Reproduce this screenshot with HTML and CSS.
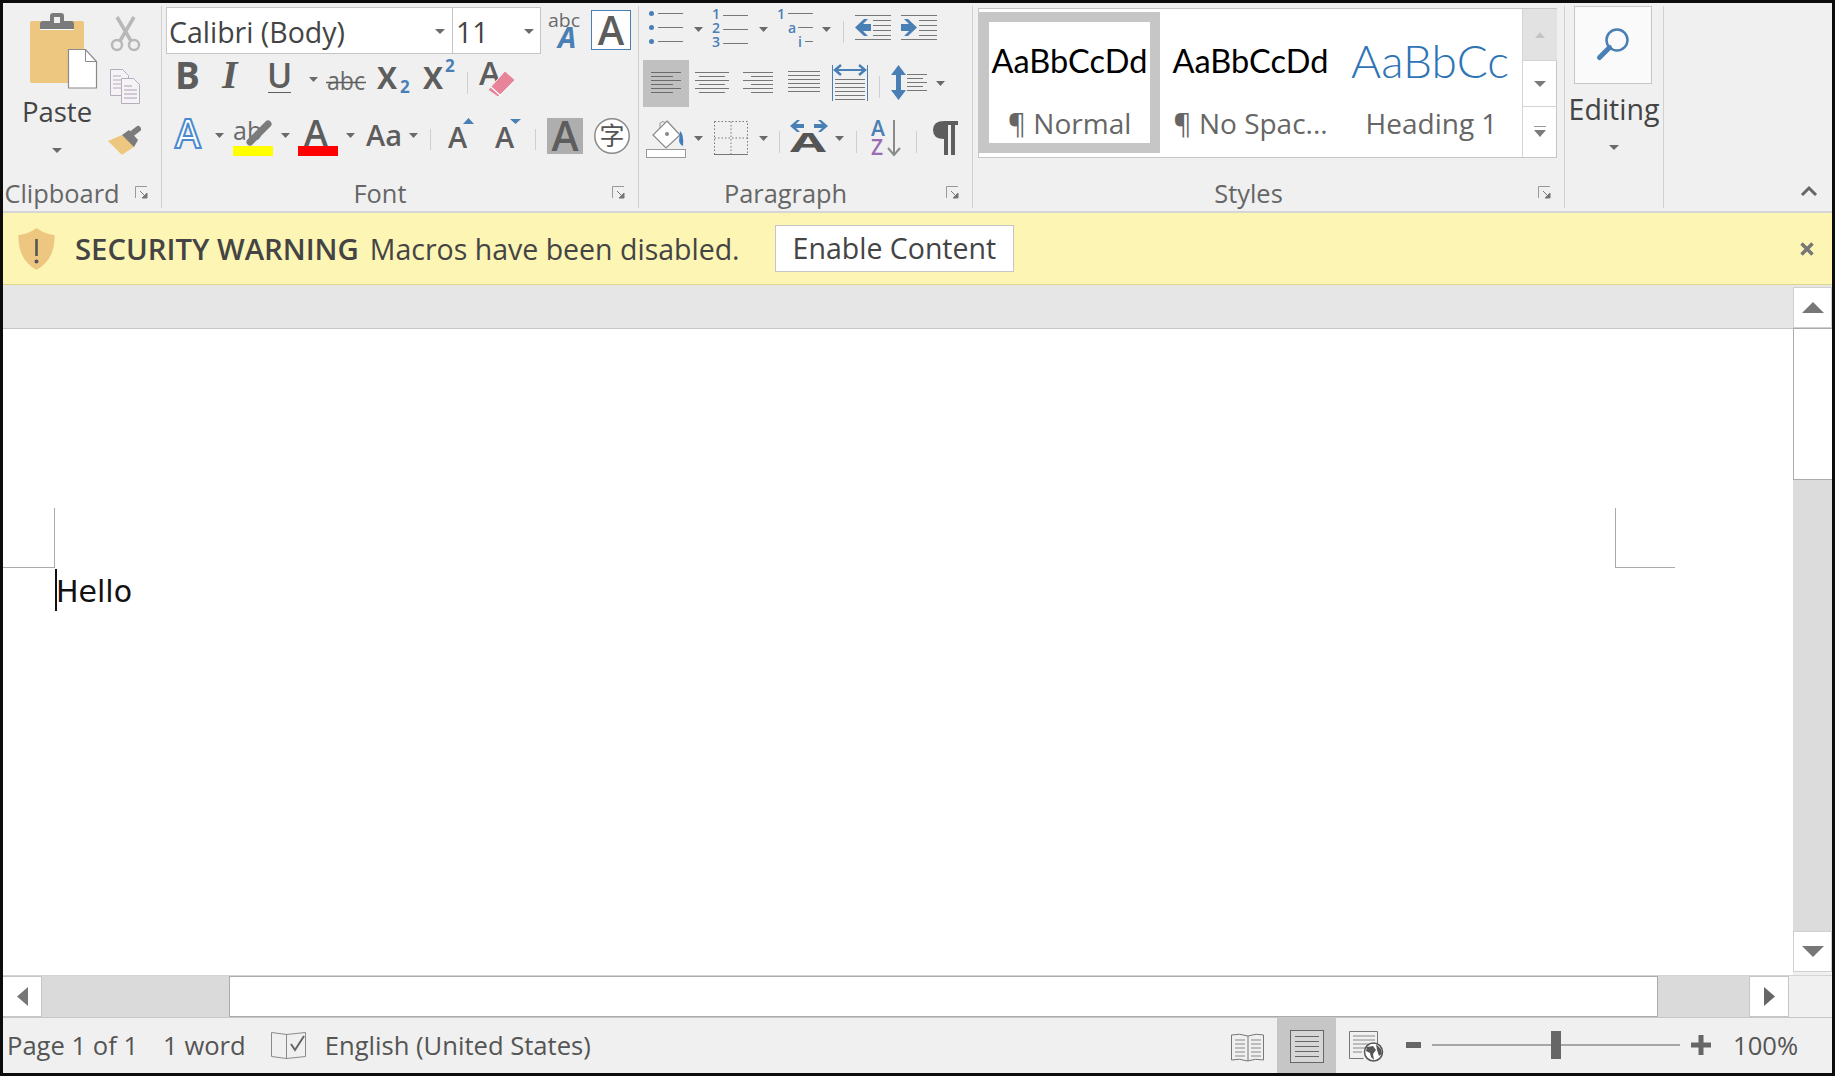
FILE: index.html
```html
<!DOCTYPE html>
<html>
<head>
	<meta charset="UTF-8">
	<title>Word</title>
	<link rel="stylesheet" href="styles.css">
</head>
<body>
<div class="window">

	<div class="ribbon">
		<!-- clipboard -->
		<div class="group g-clip">
			<div class="gbody clip-body">
				<div class="paste">
					<svg width="96" height="84" viewBox="9 6 96 84">
						<rect x="30" y="21" width="54" height="62" rx="2" fill="#edc77f"/>
						<path d="M40 29v-5q0-3 3-3h7v-5q0-3 3-3h8q3 0 3 3v5h7q3 0 3 3v5z" fill="#7b7b7b"/>
						<rect x="54" y="17" width="6" height="6" fill="#f0f0f0"/>
						<path d="M40 29.500h34" stroke="#fff" stroke-width="1"/>
						<path d="M68.500 49.500h17l11 12v26.500h-28z" fill="#fff" stroke="#8a8a8a" stroke-width="1.200"/>
						<path d="M85.500 49.500v12h11" fill="none" stroke="#8a8a8a"/>
					</svg>
					<div class="paste-text">Paste</div>
					<svg class="paste-caret" width="12" height="8" viewBox="0 0 12 8"><polygon points="1,1 11,1 6,6" fill="#6a6a6a"/></svg>
				</div>
				<div class="clip-tools">
					<svg width="45" height="54" viewBox="105 6 45 54">
						<path d="M117 17l14 24M134 17l-14 24" stroke="#b8b8b8" stroke-width="3.500" fill="none"/>
						<circle cx="117" cy="45" r="5" fill="none" stroke="#b8b8b8" stroke-width="2.500"/>
						<circle cx="134" cy="45" r="5" fill="none" stroke="#b8b8b8" stroke-width="2.500"/>
					</svg>
					<svg width="45" height="54" viewBox="105 60 45 54">
						<path d="M110.500 69.500h12l6 6v20h-18z" fill="#f6f3f7" stroke="#b5acbd"/>
						<path d="M113 76h8M113 80h12M113 84h12M113 88h12" stroke="#b5acbd"/>
						<path d="M121.500 78.500h12l6 6v19h-18z" fill="#f6f3f7" stroke="#b5acbd"/>
						<path d="M124 86h8M124 90h13M124 94h13M124 98h13" stroke="#a9a0b0"/>
					</svg>
					<svg width="45" height="54" viewBox="105 114 45 54">
						<polygon points="108,140 122,134 135,145 122,154" fill="#edc77f"/>
						<polygon points="122,134 129,129 138,139 134,146" fill="#7b7b7b"/>
						<path d="M129 135l9-7" stroke="#7b7b7b" stroke-width="6" stroke-linecap="round"/>
					</svg>
				</div>
			</div>
			<div class="glabel">Clipboard
				<svg class="launch" width="13" height="13" viewBox="0 0 13 13"><path d="M.5 12v-11.500h11.500" fill="none" stroke="#999"/><path d="M5 5l5 5M12 7v5h-5z" fill="#777" stroke="#777"/></svg>
			</div>
		</div>

		<!-- font -->
		<div class="group g-font">
			<div class="gbody font-body">
				<div class="row row-combo">
					<div class="combo combo-name"><span>Calibri (Body)</span><svg width="12" height="8" viewBox="0 0 12 8"><polygon points="1,1 11,1 6,6" fill="#6a6a6a"/></svg></div>
					<div class="combo combo-size"><span>11</span><svg width="12" height="8" viewBox="0 0 12 8"><polygon points="1,1 11,1 6,6" fill="#6a6a6a"/></svg></div>
					<svg width="46" height="47" viewBox="541 7 46 47">
						<text x="548" y="27" class="t" font-size="19" fill="#6a6a6a" textLength="32" lengthAdjust="spacingAndGlyphs">abc</text>
						<text x="558" y="48" class="t" font-size="29" font-weight="700" font-style="italic" fill="#4a7fb5">A</text>
					</svg>
					<div class="box-a">A</div>
				</div>
				<div class="row row-b">
					<svg width="35" height="38" viewBox="170 60 35 38"><text x="175" y="89" class="t" font-size="37" font-weight="700" fill="#5d5d5d">B</text></svg>
					<svg width="48" height="38" viewBox="205 60 48 38"><text x="222" y="88" class="serif" font-size="40" font-weight="700" font-style="italic" fill="#5d5d5d">I</text></svg>
					<svg width="52" height="38" viewBox="253 60 52 38"><text x="267" y="88" class="t" font-size="34" font-weight="600" fill="#5d5d5d">U</text><path d="M268 92.500h23" stroke="#5d5d5d"/></svg>
					<svg width="16" height="38" viewBox="305 60 16 38"><polygon points="309,77 318,77 313.500,82" fill="#6a6a6a"/></svg>
					<svg width="50" height="38" viewBox="321 60 50 38"><text x="327" y="90" class="t" font-size="26" fill="#6a6a6a" textLength="38" lengthAdjust="spacingAndGlyphs">abc</text><path d="M326 82.500h40" stroke="#5d5d5d" stroke-width="1.500"/></svg>
					<svg width="46" height="38" viewBox="371 60 46 38"><text x="377" y="89" class="t" font-size="30" font-weight="700" fill="#5d5d5d">X</text><text x="400" y="93" class="t" font-size="17" font-weight="700" fill="#4a7fb5">2</text></svg>
					<svg width="46" height="38" viewBox="417 60 46 38"><text x="423" y="89" class="t" font-size="30" font-weight="700" fill="#5d5d5d">X</text><text x="445" y="72" class="t" font-size="17" font-weight="700" fill="#4a7fb5">2</text></svg>
					<svg width="12" height="38" viewBox="463 60 12 38"><path d="M467.500 72v22" stroke="#cfcfcf"/></svg>
					<svg width="47" height="38" viewBox="475 60 47 38">
						<text x="479" y="85" class="t" font-size="33" font-weight="600" fill="#5d5d5d">A</text>
						<polygon points="488,90 505,71 515,80 498,97" fill="#e8849a" stroke="#f0f0f0"/>
						<path d="M491 87l10 9" stroke="#fff" stroke-width="1.200"/>
					</svg>
				</div>
				<div class="row row-c">
					<svg width="41" height="44" viewBox="170 114 41 44"><text x="175" y="148" class="t" font-size="39" font-weight="600" fill="#fff" stroke="#4a8ad0" stroke-width="2">A</text></svg>
					<svg width="16" height="44" viewBox="211 114 16 44"><polygon points="215,133 224,133 219.500,138" fill="#6a6a6a"/></svg>
					<svg width="50" height="44" viewBox="227 114 50 44">
						<text x="233" y="140" class="t" font-size="25" fill="#6a6a6a">ab</text>
						<path d="M268 124l-18 18" stroke="#7b7b7b" stroke-width="7" stroke-linecap="round"/>
						<rect x="233" y="146" width="40" height="10" fill="#ff0"/>
					</svg>
					<svg width="16" height="44" viewBox="277 114 16 44"><polygon points="281,133 290,133 285.500,138" fill="#6a6a6a"/></svg>
					<svg width="50" height="44" viewBox="293 114 50 44">
						<text x="304" y="146" class="t" font-size="36" font-weight="600" fill="#5d5d5d">A</text>
						<rect x="298" y="146" width="40" height="10" fill="#f00"/>
					</svg>
					<svg width="16" height="44" viewBox="343 114 16 44"><polygon points="346,133 355,133 350.500,138" fill="#6a6a6a"/></svg>
					<svg width="47" height="44" viewBox="359 114 47 44"><text x="366" y="146" class="t" font-size="29" font-weight="600" fill="#5d5d5d">Aa</text></svg>
					<svg width="16" height="44" viewBox="406 114 16 44"><polygon points="409,133 418,133 413.500,138" fill="#6a6a6a"/></svg>
					<svg width="14" height="44" viewBox="422 114 14 44"><path d="M430.500 129v21" stroke="#cfcfcf"/></svg>
					<svg width="45" height="44" viewBox="436 114 45 44"><text x="448" y="148" class="t" font-size="29" font-weight="600" fill="#5d5d5d">A</text><polygon points="463,124 474,124 468.500,118" fill="#4a7fb5"/></svg>
					<svg width="48" height="44" viewBox="481 114 48 44"><text x="495" y="148" class="t" font-size="29" font-weight="600" fill="#5d5d5d">A</text><polygon points="510,119 521,119 515.500,124" fill="#4a7fb5"/></svg>
					<svg width="14" height="44" viewBox="529 114 14 44"><path d="M535.500 129v21" stroke="#cfcfcf"/></svg>
					<div class="shade-a">A</div>
					<svg class="ruby" width="40" height="44" viewBox="591 114 40 44"><circle cx="611" cy="136" r="17.200" fill="#fff" stroke="#8a8a8a" stroke-width="1.500"/><text x="611" y="145" class="cjk" text-anchor="middle" font-size="25" fill="#555">字</text></svg>
				</div>
			</div>
			<div class="glabel">Font
				<svg class="launch" width="13" height="13" viewBox="0 0 13 13"><path d="M.5 12v-11.500h11.500" fill="none" stroke="#999"/><path d="M5 5l5 5M12 7v5h-5z" fill="#777" stroke="#777"/></svg>
			</div>
		</div>

		<!-- paragraph -->
		<div class="group g-para">
			<div class="gbody para-body">
				<div class="row row-p1">
					<svg width="60" height="40" viewBox="643 8 60 40" class="first">
						<g fill="#4a7fb5"><circle cx="651.500" cy="13.500" r="2.500"/><circle cx="651.500" cy="27.500" r="2.500"/><circle cx="651.500" cy="41.500" r="2.500"/></g>
						<path d="M658 13.500h25M658 27.500h25M658 41.500h25" stroke="#777"/>
						<polygon points="694,27 703,27 698.500,32" fill="#6a6a6a"/>
					</svg>
					<svg width="65" height="40" viewBox="703 8 65 40">
						<g class="t" font-size="14" fill="#4a7fb5" font-weight="600"><text x="712" y="19">1</text><text x="712" y="33">2</text><text x="712" y="47">3</text></g>
						<path d="M723 15.500h25M723 29.500h25M723 43.500h25" stroke="#777"/>
						<polygon points="759,27 768,27 763.500,32" fill="#6a6a6a"/>
					</svg>
					<svg width="63" height="40" viewBox="768 8 63 40">
						<g class="t" font-size="14" fill="#4a7fb5" font-weight="600"><text x="777" y="19">1</text><text x="788" y="33">a</text><text x="798" y="47">i</text></g>
						<path d="M788 13.500h25M798 27.500h15M805 41.500h8" stroke="#777"/>
						<polygon points="822,27 831,27 826.500,32" fill="#6a6a6a"/>
					</svg>
					<svg width="18" height="40" viewBox="831 8 18 40"><path d="M843.500 21v22" stroke="#cfcfcf"/></svg>
					<svg width="46" height="40" viewBox="849 8 46 40">
						<path d="M855 15.500h36M873 20.500h18M873 25.500h18M873 30.500h18M873 35.500h18M855 39.500h36" stroke="#777"/>
						<polygon points="855,27.500 864,19 868,19 863,24 871,24 871,31 863,31 868,36 864,36" fill="#4a7fb5"/>
					</svg>
					<svg width="46" height="40" viewBox="895 8 46 40">
						<path d="M901 15.500h36M919 20.500h18M919 25.500h18M919 30.500h18M919 35.500h18M901 39.500h36" stroke="#777"/>
						<polygon points="917,27.500 908,19 904,19 909,24 901,24 901,31 909,31 904,36 908,36" fill="#4a7fb5"/>
					</svg>
				</div>
				<div class="row row-p2">
					<svg width="46" height="52" viewBox="643 58 46 52" class="first">
						<rect x="643" y="60" width="46" height="47" fill="#c0c0c0"/>
						<path d="M651 72.500h30M651 76.500h22M651 80.500h30M651 84.500h22M651 88.500h30M651 92.500h22" stroke="#6a6a6a"/>
					</svg>
					<svg width="46" height="52" viewBox="689 58 46 52">
						<path d="M695 72.500h34M699 76.500h26M695 80.500h34M699 84.500h26M695 88.500h34M699 92.500h26" stroke="#777"/>
					</svg>
					<svg width="46" height="52" viewBox="735 58 46 52">
						<path d="M743 72.500h30M751 76.500h22M743 80.500h30M751 84.500h22M743 88.500h30M751 92.500h22" stroke="#777"/>
					</svg>
					<svg width="46" height="52" viewBox="781 58 46 52">
						<path d="M788 71.500h32M788 75.500h32M788 79.500h32M788 83.500h32M788 87.500h32M788 91.500h32" stroke="#777"/>
					</svg>
					<svg width="46" height="52" viewBox="827 58 46 52">
						<path d="M832.500 65v36M867.500 65v36" stroke="#4a7fb5"/>
						<path d="M837 70h26" stroke="#4a7fb5" stroke-width="2"/>
						<path d="M841 65l-6 5 6 5M859 65l6 5-6 5" fill="none" stroke="#4a7fb5" stroke-width="2.500"/>
						<path d="M835 79.500h30M835 83.500h30M835 87.500h30M835 91.500h30M835 95.500h30M835 99.500h30" stroke="#777"/>
					</svg>
					<svg width="14" height="52" viewBox="873 58 14 52"><path d="M879.500 76v22" stroke="#cfcfcf"/></svg>
					<svg width="60" height="52" viewBox="887 58 60 52">
						<polygon points="891,75 898.500,65 906,75 901,75 901,90 906,90 898.500,100 891,90 896,90 896,75" fill="#4a7fb5"/>
						<path d="M907 74.500h20M907 78.500h16M907 82.500h20M907 86.500h16M907 90.500h20" stroke="#777"/>
						<polygon points="936,81 945,81 940.500,86" fill="#6a6a6a"/>
					</svg>
				</div>
				<div class="row row-p3">
					<svg width="60" height="42" viewBox="643 118 60 42" class="first">
						<rect x="646.500" y="149.500" width="39" height="8" fill="#fff" stroke="#999"/>
						<path d="M660 130v-7q3-3 6 0v10" fill="none" stroke="#999"/>
						<polygon points="667,121 680,135 666,148 653,135" fill="#fff" stroke="#888" stroke-width="1.200"/>
						<circle cx="667" cy="134" r="2" fill="#888"/>
						<path d="M680 131q4 3 3 15-3-1-4-5z" fill="#3f7fbf"/>
						<polygon points="694,136 703,136 698.500,141" fill="#6a6a6a"/>
					</svg>
					<svg width="65" height="42" viewBox="703 118 65 42">
						<path d="M714.500 121.500h33v33M714.500 121.500v33M731 121.500v33M714.500 138h33" fill="none" stroke="#777" stroke-dasharray="1.500 2"/>
						<path d="M714 154.500h34" stroke="#777"/>
						<polygon points="759,136 768,136 763.500,141" fill="#6a6a6a"/>
					</svg>
					<svg width="10" height="42" viewBox="768 118 10 42"></svg>
					<svg width="8" height="42" viewBox="778 118 8 42"><path d="M779.500 131v22" stroke="#cfcfcf"/></svg>
					<svg width="64" height="42" viewBox="786 118 64 42">
						<text x="790" y="152" class="t" font-size="27" font-weight="700" fill="#555" textLength="36" lengthAdjust="spacingAndGlyphs">A</text>
						<polygon points="790,126 797,120 800,120 796,124 804,124 804,128 796,128 800,132 797,132" fill="#4a7fb5"/>
						<polygon points="828,126 821,120 818,120 822,124 814,124 814,128 822,128 818,132 821,132" fill="#4a7fb5"/>
						<polygon points="835,136 844,136 839.500,141" fill="#6a6a6a"/>
					</svg>
					<svg width="12" height="42" viewBox="850 118 12 42"><path d="M856.500 131v22" stroke="#cfcfcf"/></svg>
					<svg width="48" height="42" viewBox="862 118 48 42">
						<text x="871" y="136" class="t" font-size="21" font-weight="600" fill="#4a7fb5">A</text>
						<text x="871" y="155" class="t" font-size="21" font-weight="600" fill="#9b6bb5">Z</text>
						<path d="M894 120v35M888 148l6 7 6-7" fill="none" stroke="#8a8a8a" stroke-width="2"/>
					</svg>
					<svg width="13" height="42" viewBox="910 118 13 42"><path d="M916.500 131v22" stroke="#cfcfcf"/></svg>
					<svg width="40" height="42" viewBox="923 118 40 42">
						<path d="M958 121h-14q-11 0-11 9t11 9v16h4v-30h3v30h4v-30h3z" fill="#5d5d5d"/>
					</svg>
				</div>
			</div>
			<div class="glabel">Paragraph
				<svg class="launch" width="13" height="13" viewBox="0 0 13 13"><path d="M.5 12v-11.500h11.500" fill="none" stroke="#999"/><path d="M5 5l5 5M12 7v5h-5z" fill="#777" stroke="#777"/></svg>
			</div>
		</div>

		<!-- styles -->
		<div class="group g-styles">
			<div class="gbody">
				<div class="gallery">
					<div class="style-item sel">
						<div class="sample">AaBbCcDd</div>
						<div class="style-name">¶ Normal</div>
					</div>
					<div class="style-item">
						<div class="sample">AaBbCcDd</div>
						<div class="style-name">¶ No Spac...</div>
					</div>
					<div class="style-item">
						<div class="sample sample-h">AaBbCc</div>
						<div class="style-name">Heading 1</div>
					</div>
					<div class="gal-btns">
						<div class="gal-btn gal-up"><svg width="12" height="8" viewBox="0 0 12 8"><polygon points="1,7 11,7 6,1" fill="#c4c4c4"/></svg></div>
						<div class="gal-btn gal-down"><svg width="12" height="8" viewBox="0 0 12 8"><polygon points="0,1 12,1 6,7" fill="#7b7b7b"/></svg></div>
						<div class="gal-btn gal-more"><svg width="12" height="12" viewBox="0 0 12 12"><path d="M0 .5h12" stroke="#999"/><polygon points="0,4 12,4 6,11" fill="#7b7b7b"/></svg></div>
					</div>
				</div>
			</div>
			<div class="glabel">Styles
				<svg class="launch" width="13" height="13" viewBox="0 0 13 13"><path d="M.5 12v-11.500h11.500" fill="none" stroke="#999"/><path d="M5 5l5 5M12 7v5h-5z" fill="#777" stroke="#777"/></svg>
			</div>
		</div>

		<!-- editing -->
		<div class="group g-edit">
			<div class="find">
				<svg width="40" height="40" viewBox="0 0 40 40"><circle cx="24" cy="15" r="10.500" fill="none" stroke="#4a7fb5" stroke-width="2.500"/><path d="M16.500 22.500l-10 10" stroke="#4a7fb5" stroke-width="5" stroke-linecap="round"/></svg>
			</div>
			<div class="edit-text">Editing</div>
			<svg class="edit-caret" width="12" height="8" viewBox="0 0 12 8"><polygon points="1,1 11,1 6,6" fill="#6a6a6a"/></svg>
		</div>

		<div class="ribbon-end">
			<svg width="20" height="14" viewBox="0 0 20 14"><path d="M3 11l7-7 7 7" fill="none" stroke="#666" stroke-width="3"/></svg>
		</div>
	</div>

	<div class="warning">
		<svg class="shield" width="37" height="42" viewBox="0 0 37 42">
			<path d="M18.500 0q8 6 18 7 1 24-18 35-19-11-18-35 10-1 18-7z" fill="#edc77f"/>
			<path d="M17.200 11h2.600v17h-2.600z" fill="#555"/><circle cx="18.500" cy="33.500" r="2" fill="#555"/>
		</svg>
		<b class="warn-title">SECURITY WARNING</b>
		<span class="warn-msg">Macros have been disabled.</span>
		<div class="enable">Enable Content</div>
		<svg class="warn-close" width="14" height="14" viewBox="0 0 14 14"><path d="M1.500 1.500l11 11M12.500 1.500l-11 11" stroke="#777" stroke-width="3.500"/></svg>
	</div>

	<div class="main">
		<div class="doc-area">
			<div class="band"></div>
			<div class="page">
				<div class="crops">
					<div class="crop crop-l"></div>
					<div class="crop crop-r"></div>
				</div>
				<div class="line"><i class="cursor"></i><span class="hello">Hello</span></div>
			</div>
		</div>
		<div class="vscroll">
			<div class="vbtn vbtn-up"><svg width="22" height="11" viewBox="0 0 22 11"><polygon points="0,11 22,11 11,0" fill="#777"/></svg></div>
			<div class="vthumb"></div>
			<div class="vtrack"></div>
			<div class="vbtn vbtn-down"><svg width="22" height="11" viewBox="0 0 22 11"><polygon points="0,0 22,0 11,11" fill="#777"/></svg></div>
		</div>
	</div>

	<div class="hscroll">
		<div class="hbtn hbtn-l"><svg width="11" height="19" viewBox="0 0 11 19"><polygon points="11,0 11,19 0,9.500" fill="#777"/></svg></div>
		<div class="htrack htrack-l"></div>
		<div class="hthumb"></div>
		<div class="htrack htrack-r"></div>
		<div class="hbtn hbtn-r"><svg width="11" height="19" viewBox="0 0 11 19"><polygon points="0,0 0,19 11,9.500" fill="#666"/></svg></div>
	</div>

	<div class="status">
		<span class="st-page">Page 1 of 1</span>
		<span class="st-words">1 word</span>
		<svg class="st-book" width="35" height="29" viewBox="0 0 35 29">
			<path d="M.5 1.500l15 2v24l-15-2zM34.500 1.500l-19 2v24l19-2z" fill="none" stroke="#8a8a8a"/>
			<path d="M20 13l4 6 9-14" fill="none" stroke="#666" stroke-width="2"/>
		</svg>
		<span class="st-lang">English (United States)</span>
		<div class="st-right">
			<svg width="52" height="55" viewBox="1225 1018 52 55">
				<path d="M1248 1036q-9-3-16.500-1v25q8-2 16 1 8-3 16-1v-25q-7-2-15.500 1zM1248 1036v25" fill="none" stroke="#777"/>
				<path d="M1235 1040h10M1235 1044h10M1235 1048h10M1235 1052h10M1235 1056h10M1251 1040h10M1251 1044h10M1251 1048h10M1251 1052h10M1251 1056h10" stroke="#888"/>
			</svg>
			<svg class="st-on" width="59" height="55" viewBox="1277 1018 59 55">
				<rect x="1290.500" y="1030.500" width="33" height="32" fill="#d6d6d6" stroke="#666"/>
				<path d="M1295 1036.500h24M1295 1041.500h24M1295 1046.500h24M1295 1051.500h24M1295 1056.500h24" stroke="#666"/>
			</svg>
			<svg width="389" height="55" viewBox="1336 1018 389 55">
				<path d="M1349.500 1031.500h28v20M1349.500 1031.500v27h14" fill="none" stroke="#777"/>
				<path d="M1353 1036h22M1353 1040h22M1353 1044h16M1353 1048h12M1353 1052h9" stroke="#888"/>
				<circle cx="1373.500" cy="1052" r="9" fill="#fff" stroke="#555" stroke-width="1.500"/>
				<path d="M1367 1047l6-1 3 4-3 4 1 6-3-3-1-4-4-2zM1376 1044l5 5 1 5-3 2-2-6z" fill="#555"/>
				<path d="M1406 1045h15" stroke="#666" stroke-width="6"/>
				<path d="M1432 1045h248" stroke="#a6a6a6" stroke-width="2"/>
				<rect x="1551" y="1031" width="10" height="28" fill="#666"/>
				<path d="M1691 1045h20M1701 1035v20" stroke="#666" stroke-width="5"/>
			</svg>
			<span class="st-zoom">100%</span>
		</div>
	</div>

</div>
</body>
</html>
```

FILE: styles.css
```css
* {margin:0; padding:0; box-sizing:border-box;}
html, body {width:1835px; height:1076px; overflow:hidden;}
body {font-family:"Open Sans","Noto Sans",sans-serif; background:#000; color:#555;}
svg {display:block; flex:none; overflow:visible;}
svg .t, svg text.t {font-family:"Open Sans",sans-serif;}
.serif {font-family:"Liberation Serif",serif;}
.cjk {font-family:"Noto Sans CJK SC",sans-serif;}

.window {width:1835px; height:1076px; border:3px solid #0c0c0c; display:flex; flex-direction:column; background:#fff;}

/* ribbon */
.ribbon {height:210px; background:#f0f0f0; border-bottom:2px solid #d6d6d6; display:flex; flex:none;}
.group {margin-top:3px; height:202px; border-right:1px solid #d0d0d0; display:flex; flex-direction:column; flex:none;}
.g-clip {width:159px;}
.g-font {width:477px;}
.g-para {width:334px;}
.g-styles {width:592px;}
.g-edit {width:99px; align-items:center;}
.gbody {height:172px; flex:none;}
.glabel {height:30px; position:relative; display:flex; justify-content:center; align-items:center; padding:0 40px 1px 0; font-size:25.400px; color:#666; white-space:nowrap;}
.launch {position:absolute; right:13px; top:8px;}
.ribbon-end {flex:1; display:flex; justify-content:flex-end; align-items:flex-end; padding:0 13px 13px 0;}

/* clipboard */
.clip-body {display:flex;}
.paste {width:102px; padding-left:6px; display:flex; flex-direction:column; align-items:center;}
.paste-text {font-size:27.500px; line-height:43px; color:#444;}
.paste-caret {margin-top:14px;}
.clip-tools {width:45px;}
.clip-tools svg:last-child {height:56px;}

/* rows */
.row {display:flex; align-items:flex-start;}
.row-combo {margin:1px 0 0 4px; height:47px;}
.combo {height:47px; background:#fff; border:1px solid #c6c6c6; padding-top:2px; display:flex; align-items:center; justify-content:space-between; font-size:28.500px; color:#444; white-space:nowrap;}
.combo-name {width:287px; padding-left:2px; padding-right:6px;}
.combo-size {width:89px; margin-left:-1px; padding-left:3px; padding-right:5px;}
.box-a {width:40px; height:40px; margin:3px 0 0 4px; border:1px solid #4a7fb5; background:#fff; font-size:40px; font-weight:600; line-height:37px; text-align:center; color:#5d5d5d;}
.row-b {margin:6px 0 0 8px;}
.row-c {margin:16px 0 0 8px;}
.shade-a {width:36px; height:36px; margin:4px 4px 0 4px; background:#aeaeae; font-size:41px; font-weight:600; line-height:35px; text-align:center; color:#5d5d5d;}
.ruby {margin-left:5px;}

/* paragraph */
.para-body {padding-left:4px;}
.row-p1 {margin-top:2px;}
.row-p2 {margin-top:10px;}
.row-p3 {margin-top:8px;}

/* styles gallery */
.gallery {width:579px; height:150px; margin:2px 0 0 5px; background:#fff; border:1px solid #c6c6c6; display:flex;}
.style-item {width:181px; height:141px; margin-top:3px; border:10px solid transparent; flex:none;}
.style-item.sel {border-color:#c6c6c6;}
.sample {height:81px; line-height:78px; font-family:Lato,sans-serif; font-size:32.500px; color:#000; text-align:center; white-space:nowrap; overflow:hidden;}
.sample-h {font-size:46px; font-weight:300; color:#2e74b5; text-align:left; margin-right:4px;}
.style-name {height:40px; line-height:40px; font-size:28px; color:#666; text-align:center; white-space:nowrap;}
.gal-btns {width:35px; flex:none; border-left:1px solid #d4d4d4; display:flex; flex-direction:column;}
.gal-btn {display:flex; align-items:center; justify-content:center; border-bottom:1px solid #d4d4d4;}
.gal-up {height:52px; background:#e2e2e2;}
.gal-down {height:46px;}
.gal-more {flex:1; border-bottom:0;}

/* editing */
.find {width:78px; height:78px; margin-right:2px; background:#fafafa; border:1px solid #c6c6c6; display:flex; align-items:center; justify-content:center; flex:none;}
.edit-text {font-size:28.500px; line-height:36px; margin-top:7px; color:#444;}
.edit-caret {margin-top:17px;}

/* warning bar */
.warning {height:72px; flex:none; background:#fcf5b4; border-bottom:1px solid #dcd88a; display:flex; align-items:center; padding-left:15px; color:#444; font-size:28.500px; white-space:nowrap;}
.warn-title {margin-left:20px; font-size:29.300px; font-weight:600;}
.warn-msg {margin-left:11px;}
.enable {margin-left:35px; height:47px; padding:0 17px; line-height:44px; background:#fff; border:1px solid #c6c6c6;}
.warn-close {margin-left:auto; margin-right:18px;}

/* document */
.main {flex:1; display:flex; min-height:0;}
.doc-area {flex:1; display:flex; flex-direction:column;}
.band {height:44px; background:#e6e6e6; border-bottom:1px solid #c6c6c6; flex:none;}
.page {flex:1; background:#fff; padding-top:179px;}
.crops {display:flex; justify-content:space-between; padding-right:118px;}
.crop {height:60px; border-bottom:1px solid #aaa;}
.crop-l {width:52px; border-right:1px solid #aaa;}
.crop-r {width:60px; border-left:1px solid #aaa;}
.line {margin-top:1px; padding-left:52px; height:42px; display:flex; align-items:flex-start; font-family:"DejaVu Sans",sans-serif; font-size:30px; line-height:42px; color:#111;}
.cursor {display:block; width:2px; height:42px; background:#111;}
.hello {margin:2px 0 0 -1px;}

.vscroll {width:39px; flex:none; background:#f0f0f0; border-top:2px solid #e6e6e6; padding-bottom:3px; display:flex; flex-direction:column;}
.vbtn {height:41px; background:#fff; border:1px solid #d0d0d0; display:flex; align-items:center; justify-content:center; flex:none;}
.vthumb {height:152px; background:#fff; border:1px solid #ababab; border-right:0; flex:none;}
.vtrack {flex:1; background:#dcdcdc;}

/* bottom scrollbar */
.hscroll {height:43px; flex:none; background:#f0f0f0; border-top:1px solid #d4d4d4; border-bottom:1px solid #c6c6c6; display:flex;}
.hbtn {background:#fff; display:flex; align-items:center; justify-content:center; border:1px solid #c6c6c6;}
.hbtn-l {width:39px; border-left:0;}
.hbtn-r {width:40px;}
.htrack {background:#dadada;}
.htrack-l {width:187px;}
.htrack-r {width:91px;}
.hthumb {width:1429px; background:#fff; border:1px solid #ababab;}

/* status */
.status {height:55px; flex:none; background:#f0f0f0; display:flex; align-items:center; font-size:25.600px; color:#555; white-space:nowrap;}
.st-page {margin-left:4px;}
.st-words {margin-left:25px;}
.st-book {margin-left:25px;}
.st-lang {margin-left:19px;}
.st-right {margin-left:auto; display:flex; align-items:center; height:100%;}
.st-on {background:#c6c6c6;}
.st-zoom {width:107px; padding-left:8px;}
```
